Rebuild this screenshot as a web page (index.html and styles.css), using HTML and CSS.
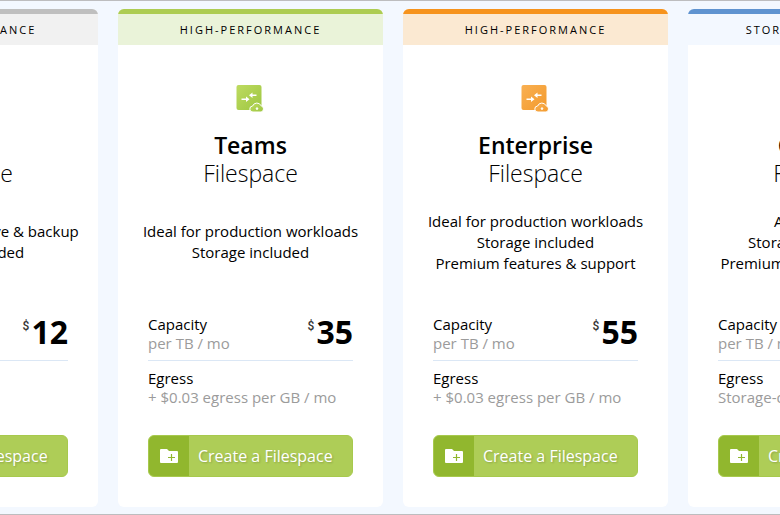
FILE: index.html
```html
<!DOCTYPE html>
<html lang="en">
<head>
    <meta charset="UTF-8">
    <meta name="viewport" content="width=device-width, initial-scale=1.0">
    <title>Filespace Pricing</title>
    <link rel="stylesheet" href="styles.css">
</head>
<body>

<!-- shared icons -->
<svg class="sprite" aria-hidden="true">
    <linearGradient id="green" x1="0" y1="0" x2="1" y2="1">
        <stop offset="0" stop-color="#bedb60"/>
        <stop offset="1" stop-color="#9dc641"/>
    </linearGradient>
    <linearGradient id="orange" x1="0" y1="0" x2="1" y2="1">
        <stop offset="0" stop-color="#f9b052"/>
        <stop offset="1" stop-color="#f39a2d"/>
    </linearGradient>
    <symbol id="arrows" viewBox="0 0 28 28">
        <rect width="25" height="25" rx="2"/>
        <path d="M5 13.500h4.500V11.500l3.500 2.700-3.500 2.700v-2H5zM20 9.500h-4V7.500L12.500 10.200l3.500 2.700v-2H20z" fill="#fff"/>
        <path d="M16.500 27a3 3 0 0 1-.4-6 4.600 4.600 0 0 1 8.500-.2 3.200 3.200 0 0 1 0 6.200z" stroke="#fff" stroke-width="1"/>
        <path d="M20.500 22l1.700 1.700h-1v1.300h-1.400v-1.300h-1z" fill="#fff"/>
    </symbol>
    <symbol id="folder" viewBox="0 0 18 14">
        <path d="M1 0h6l2 2h8a1 1 0 0 1 1 1v10a1 1 0 0 1-1 1H1a1 1 0 0 1-1-1V1a1 1 0 0 1 1-1z" fill="#fff"/>
        <path d="M8 8.500h7M11.500 5v7" stroke="#91b72e" stroke-width="1.200"/>
    </symbol>
</svg>

<main class="plans">
    <section class="card basic">
        <div class="tag">HIGH-PERFORMANCE</div>
        <svg class="icon"><use href="#arrows"/></svg>
        <h2>Basic <span>Filespace</span></h2>
        <p class="desc">Ideal for active archive &amp; backup<br>Storage included</p>
        <div class="row">
            <div>Capacity <small>per TB / mo</small></div>
            <div class="price"><sup>$</sup>12</div>
        </div>
        <div class="row">
            <div>Egress <small>Free egress</small></div>
        </div>
        <button type="button"><span class="btn-icon"><svg><use href="#folder"/></svg></span><span class="btn-text">Create a Filespace</span></button>
    </section>

    <section class="card teams">
        <div class="tag">HIGH-PERFORMANCE</div>
        <svg class="icon"><use href="#arrows"/></svg>
        <h2>Teams <span>Filespace</span></h2>
        <p class="desc">Ideal for production workloads<br>Storage included</p>
        <div class="row">
            <div>Capacity <small>per TB / mo</small></div>
            <div class="price"><sup>$</sup>35</div>
        </div>
        <div class="row">
            <div>Egress <small>+ $0.03 egress per GB / mo</small></div>
        </div>
        <button type="button"><span class="btn-icon"><svg><use href="#folder"/></svg></span><span class="btn-text">Create a Filespace</span></button>
    </section>

    <section class="card enterprise">
        <div class="tag">HIGH-PERFORMANCE</div>
        <svg class="icon"><use href="#arrows"/></svg>
        <h2>Enterprise <span>Filespace</span></h2>
        <p class="desc">Ideal for production workloads<br>Storage included<br>Premium features &amp; support</p>
        <div class="row">
            <div>Capacity <small>per TB / mo</small></div>
            <div class="price"><sup>$</sup>55</div>
        </div>
        <div class="row">
            <div>Egress <small>+ $0.03 egress per GB / mo</small></div>
        </div>
        <button type="button"><span class="btn-icon"><svg><use href="#folder"/></svg></span><span class="btn-text">Create a Filespace</span></button>
    </section>

    <section class="card custom">
        <div class="tag">STORAGE-DEPENDENT</div>
        <svg class="icon"><use href="#arrows"/></svg>
        <h2>Custom <span>Filespace</span></h2>
        <p class="desc">All workloads<br>Storage not included<br>Premium features &amp; support</p>
        <div class="row">
            <div>Capacity <small>per TB / mo</small></div>
            <div class="price"><sup>$</sup>20</div>
        </div>
        <div class="row">
            <div>Egress <small>Storage-dependent</small></div>
        </div>
        <button type="button"><span class="btn-icon"><svg><use href="#folder"/></svg></span><span class="btn-text">Create a Filespace</span></button>
    </section>
</main>

</body>
</html>
```
FILE: styles.css
```css
* {
    box-sizing: border-box;
}
body {
    margin: 0;
    font-family: "Open Sans", sans-serif;
    font-size: 15px;
    color: #000;
    background-color: #f3f8ff;
}
.sprite {
    display: block;
    width: 0;
    height: 0;
}
.plans {
    display: flex;
    justify-content: center;
    gap: 20px;
    min-height: 100vh;
    padding: 8px 0 7px 6px;
    border-top: 1px solid #bdbdbf;
    border-bottom: 1px solid #bdbdbf;
    overflow: hidden;
}
.card {
    flex: 0 0 265px;
    display: flex;
    flex-direction: column;
    padding-bottom: 30px;
    background-color: #fff;
    border-radius: 6px;
    overflow: hidden;
}
.tag {
    padding: 6px 0 5px;
    border-top: 5px solid #5f93d0;
    background-color: #f3f8ff;
    font-size: 11px;
    line-height: 20px;
    letter-spacing: 2px;
    text-align: center;
}
.icon {
    width: 29px;
    height: 28px;
    margin: 40px auto 0;
    fill: #5f93d0;
}
h2 {
    margin: 18px 0 0;
    font-size: 23px;
    font-weight: 600;
    line-height: 28px;
    text-align: center;
}
h2 span {
    display: block;
    font-weight: 300;
}
.desc {
    display: flex;
    flex-direction: column;
    justify-content: center;
    height: 64px;
    margin: 23px 0 41px;
    line-height: 21px;
    text-align: center;
}
.row {
    display: flex;
    justify-content: space-between;
    margin: 0 30px;
    line-height: 19px;
}
.row + .row {
    margin-top: 7px;
    padding-top: 8px;
    border-top: 1px solid #dbe7f5;
}
.row small {
    display: block;
    font-size: 15px;
    color: #9b9b9b;
}
.price {
    display: flex;
    font-size: 32px;
    font-weight: 700;
    line-height: 34px;
}
.price sup {
    margin-right: 2px;
    font-family: Roboto, sans-serif;
    font-size: 12px;
    font-weight: 500;
    line-height: 22px;
    color: #333;
}
button {
    display: flex;
    height: 42px;
    margin: 28px 30px 0;
    padding: 0;
    border: 1px solid #a7c94d;
    border-radius: 6px;
    background-color: #aecd57;
    color: #fff;
    font-family: inherit;
    font-size: 16px;
    text-shadow: 1px 1px 2px rgba(0, 0, 0, 0.2);
    overflow: hidden;
    cursor: pointer;
}
button:hover {
    background-color: #a2c348;
}
.btn-icon {
    display: flex;
    align-items: center;
    justify-content: center;
    width: 40px;
    height: 100%;
    background-color: #91b72e;
}
.btn-icon svg {
    width: 18px;
    height: 14px;
}
.btn-text {
    align-self: center;
    padding-left: 9px;
    white-space: nowrap;
}
.basic .tag {
    border-color: #bfbfbf;
    background-color: #f1f1f1;
}
.basic .icon {
    fill: #bfbfbf;
}
.teams .tag {
    border-color: #adcc52;
    background-color: #eaf3d9;
}
.teams .icon {
    fill: url(#green);
}
.enterprise .tag {
    border-color: #f6931d;
    background-color: #fbe9d2;
}
.enterprise .icon {
    fill: url(#orange);
}
```
